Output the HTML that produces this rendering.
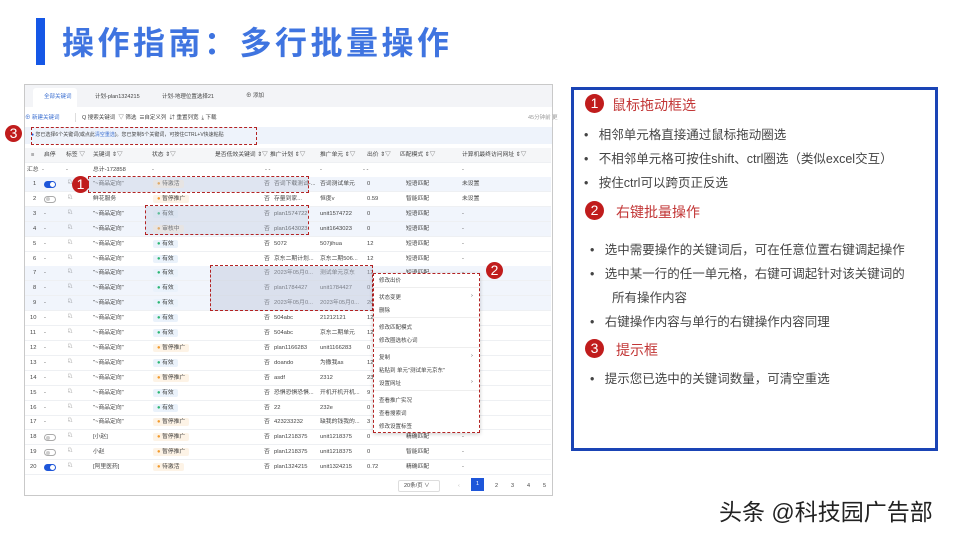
<!DOCTYPE html>
<html><head><meta charset="utf-8">
<style>
*{margin:0;padding:0;box-sizing:border-box}
body{width:960px;height:540px;background:#fff;position:relative;overflow:hidden;font-family:"Liberation Sans","Noto Sans CJK SC",sans-serif;color:#333}
.a{position:absolute;white-space:nowrap}
.t{font-size:5.5px;color:#444;line-height:8px}
.lk{color:#3b6fd1}
.row{position:absolute;left:25px;width:526px;height:15px;border-bottom:1px solid #eef0f3}
.row span{position:absolute;top:3px;font-size:5.8px;line-height:8px;white-space:nowrap;color:#444}
.tag{padding:0 4px;border-radius:2px}
.tg{background:#eaf2fb}
.to{background:#fdf3e6}
.tg:before{content:"● ";color:#2bb673}
.to:before{content:"● ";color:#f39a2b}
.tog{width:12px;height:7px;border-radius:4px;top:4px!important}
.on{background:#1e56d9}
.on:after{content:"";position:absolute;right:1px;top:1px;width:5px;height:5px;background:#fff;border-radius:50%}
.off{background:#fff;border:1px solid #aaa}
.off:after{content:"";position:absolute;left:1px;top:0.5px;width:4px;height:4px;background:#ccc;border-radius:50%}
.dash{position:absolute;border:1px dashed #b32323}
.circ{position:absolute;width:17px;height:17px;border-radius:50%;background:#c01c1c;color:#fff;font-size:14px;line-height:17px;text-align:center}
.menu span{position:absolute;left:6px;font-size:5.5px;color:#444;white-space:nowrap}
.rp p{position:absolute;font-size:12.5px;color:#444;white-space:nowrap;font-family:"Liberation Sans","Noto Sans CJK SC",sans-serif}
.rp .h{color:#c23535;font-size:14px}
.rp .circ{width:19px;height:19px;line-height:19px;font-size:14px}
</style></head><body>

<div class="a" style="left:36px;top:18px;width:9px;height:47px;background:#1557e6"></div>
<div class="a" style="left:62px;top:22px;font-size:32px;font-weight:bold;color:#3f74e0;letter-spacing:3.5px;line-height:38px;font-family:'Noto Sans CJK SC',sans-serif">操作指南：多行批量操作</div>

<div class="a" style="left:24px;top:84px;width:529px;height:412px;border:1px solid #c9c9c9;background:#fff"></div>
<div class="a" style="left:25px;top:85px;width:527px;height:22px;background:#f3f4f7"></div>
<div class="a" style="left:33px;top:88px;width:44px;height:19px;background:#fff;border-radius:3px 3px 0 0"></div>
<div class="a t lk" style="left:44px;top:93px">全部关键词</div>
<div class="a t" style="left:95px;top:93px">计划-plan1324215</div>
<div class="a t" style="left:162px;top:93px">计划-地理位置选择21</div>
<div class="a t" style="left:246px;top:92px">⊕ 添加</div>

<div class="a t lk" style="left:25px;top:114px">⊕ 新建关键词</div>
<div class="a" style="left:75px;top:113px;width:1px;height:9px;background:#ddd"></div>
<div class="a t" style="left:82px;top:114px">Q 搜索关键词 &nbsp;▽ 筛选 &nbsp;☰自定义列 &nbsp;⇵ 重置列宽 &nbsp;⤓ 下载</div>
<div class="a t" style="left:528px;top:114px;color:#999">45分钟前 更</div>

<div class="a" style="left:25px;top:127px;width:527px;height:17px;background:#eef3fb"></div>
<div class="a t" style="left:31px;top:131px;font-size:5px"><span style="color:#1e56d9">●</span> 您已选择6个关键词(或点此<span class="lk">清空重选</span>)。您已复制5个关键词，可按住CTRL+V快速粘贴</div>
<div class="dash" style="left:31px;top:127px;width:226px;height:18px"></div>

<div class="row" style="top:148px;background:#f5f6f8">
<span style="left:6px">≡</span><span style="left:19px">启停</span><span style="left:41px">标签 ▽</span><span style="left:68px">关键词 ⇕▽</span><span style="left:127px">状态 ⇕▽</span><span style="left:190px">是否低效关键词 ⇕▽</span><span style="left:245px">推广计划 ⇕▽</span><span style="left:295px">推广单元 ⇕▽</span><span style="left:342px">出价 ⇕▽</span><span style="left:375px">匹配模式 ⇕▽</span><span style="left:437px">计算机最终访问网址 ⇕▽</span></div>
<div class="row" style="top:163px">
<span style="left:2px">汇总</span><span style="left:17px">-</span><span style="left:41px">-</span><span style="left:68px">总计-172858</span><span style="left:127px">-</span><span style="left:240px">- -</span><span style="left:295px">-</span><span style="left:338px">- -</span><span style="left:437px">-</span></div>

<div id="rows"></div>

<div class="a" style="left:88px;top:177px;width:220px;height:15px;background:rgba(190,200,220,.35)"></div>
<div class="a" style="left:145px;top:206px;width:163px;height:29px;background:rgba(190,200,220,.35)"></div>
<div class="a" style="left:210px;top:266px;width:163px;height:45px;background:rgba(190,200,220,.45)"></div>
<div class="dash" style="left:88px;top:176px;width:221px;height:17px"></div>
<div class="dash" style="left:145px;top:205px;width:164px;height:30px"></div>
<div class="dash" style="left:210px;top:265px;width:163px;height:46px"></div>

<div class="a menu" style="left:373px;top:273px;width:107px;height:160px;background:#fff;box-shadow:0 1px 4px rgba(0,0,0,.2)">
<span style="top:3px">修改出价</span>
<div class="a" style="left:0;top:14px;width:107px;height:1px;background:#eee"></div>
<span style="top:20px">状态变更</span><span style="top:20px;left:98px">›</span>
<span style="top:33px">删除</span>
<div class="a" style="left:0;top:44px;width:107px;height:1px;background:#eee"></div>
<span style="top:50px">修改匹配模式</span>
<span style="top:63px">修改圈选核心词</span>
<div class="a" style="left:0;top:74px;width:107px;height:1px;background:#eee"></div>
<span style="top:80px">复制</span><span style="top:80px;left:98px">›</span>
<span style="top:93px">粘贴到 单元"测试单元京东"</span>
<span style="top:106px">设置网址</span><span style="top:106px;left:98px">›</span>
<div class="a" style="left:0;top:117px;width:107px;height:1px;background:#eee"></div>
<span style="top:123px">查看推广实况</span>
<span style="top:136px">查看搜索词</span>
<span style="top:149px">修改设置标签</span>
</div>
<div class="dash" style="left:373px;top:273px;width:107px;height:160px"></div>

<div class="a t" style="left:398px;top:480px;width:42px;height:12px;border:1px solid #ddd;border-radius:2px;padding:1px 5px">20条/页 ∨</div>
<div class="a t" style="left:458px;top:482px;color:#bbb">‹</div>
<div class="a" style="left:471px;top:478px;width:13px;height:13px;background:#1e56d9;color:#fff;font-size:5.5px;text-align:center;line-height:13px">1</div>
<div class="a t" style="left:495px;top:482px">2</div>
<div class="a t" style="left:511px;top:482px">3</div>
<div class="a t" style="left:527px;top:482px">4</div>
<div class="a t" style="left:543px;top:482px">5</div>

<div class="circ" style="left:72px;top:176px">1</div>
<div class="circ" style="left:486px;top:262px">2</div>
<div class="circ" style="left:5px;top:125px">3</div>

<div class="a rp" style="left:571px;top:87px;width:367px;height:364px;border:3px solid #1a44b5">
<div class="circ" style="left:11px;top:4px">1</div>
<p class="h" style="left:38px;top:5px">鼠标拖动框选</p>
<p style="left:10px;top:34px">•&nbsp;&nbsp; 相邻单元格直接通过鼠标拖动圈选</p>
<p style="left:10px;top:58px">•&nbsp;&nbsp; 不相邻单元格可按住shift、ctrl圈选（类似excel交互）</p>
<p style="left:10px;top:82px">•&nbsp;&nbsp; 按住ctrl可以跨页正反选</p>
<div class="circ" style="left:11px;top:111px">2</div>
<p class="h" style="left:42px;top:112px">右键批量操作</p>
<p style="left:16px;top:149px">•&nbsp;&nbsp; 选中需要操作的关键词后，可在任意位置右键调起操作</p>
<p style="left:16px;top:173px">•&nbsp;&nbsp; 选中某一行的任一单元格，右键可调起针对该关键词的</p>
<p style="left:38px;top:197px">所有操作内容</p>
<p style="left:16px;top:221px">•&nbsp;&nbsp; 右键操作内容与单行的右键操作内容同理</p>
<div class="circ" style="left:11px;top:249px">3</div>
<p class="h" style="left:42px;top:250px">提示框</p>
<p style="left:16px;top:278px">•&nbsp;&nbsp; 提示您已选中的关键词数量，可清空重选</p>
</div>

<div class="a" style="left:719px;top:498px;font-size:23px;color:#222;line-height:28px">头条 @科技园广告部</div>

<script>
var d=[
["on","\"~商品定向\"","o","待激活","否词下载测试-...","否词测试单元","0","短语匹配","未设置",1],
["off","鲜花服务","o","暂停推广","存量到家...","恒度v","0.59","智能匹配","未设置",0],
["-","\"~商品定向\"","g","有效","plan1574722","unit1574722","0","短语匹配","-",1],
["-","\"~商品定向\"","o","审核中","plan1643023","unit1643023","0","短语匹配","-",1],
["-","\"~商品定向\"","g","有效","5072","507jihua","12","短语匹配","-",0],
["-","\"~商品定向\"","g","有效","京东二期计划...","京东二期506...","12","短语匹配","-",0],
["-","\"~商品定向\"","g","有效","2023年05月0...","测试单元京东","12","短语匹配","-",1],
["-","\"~商品定向\"","g","有效","plan1784427","unit1784427","0","短语匹配","-",1],
["-","\"~商品定向\"","g","有效","2023年05月0...","2023年05月0...","20","短语匹配","-",1],
["-","\"~商品定向\"","g","有效","504abc","21212121","12","短语匹配","-",0],
["-","\"~商品定向\"","g","有效","504abc","京东二期单元","12","短语匹配","-",0],
["-","\"~商品定向\"","o","暂停推广","plan1166283","unit1166283","0","短语匹配","-",0],
["-","\"~商品定向\"","g","有效","doando","为撒我as","12","短语匹配","-",0],
["-","\"~商品定向\"","o","暂停推广","asdf","2312","23","短语匹配","-",0],
["-","\"~商品定向\"","g","有效","恐惧恐惧恐惧...","开机开机开机...","9","短语匹配","-",0],
["-","\"~商品定向\"","g","有效","22","232e","0","短语匹配","-",0],
["-","\"~商品定向\"","o","暂停推广","423233232","缺我的钱我的...","3","短语匹配","-",0],
["off","[小赵]","o","暂停推广","plan1218375","unit1218375","0","精确匹配","-",0],
["off","小赵","o","暂停推广","plan1218375","unit1218375","0","智能匹配","-",0],
["on","[阿里医药]","o","待激活","plan1324215","unit1324215","0.72","精确匹配","-",0]];
var h="";
d.forEach(function(r,i){
var top=177+i*14.9;
var tg=r[0]=="-"?'<span style="left:19px">-</span>':'<span class="tog '+r[0]+'" style="left:19px"></span>';
h+='<div class="row" style="top:'+top+'px;height:15px;'+(r[9]?'background:#f1f5fc':'')+'">'+
'<span style="left:'+(i<9?8:5)+'px">'+(i+1)+'</span>'+tg+
'<span style="left:42px;font-size:7px;top:2px">♘</span>'+
'<span style="left:68px">'+r[1]+'</span>'+
'<span class="tag t'+r[2]+'" style="left:128px">'+r[3]+'</span>'+
'<span style="left:239px">否</span>'+
'<span class="lk" style="left:249px">'+r[4]+'</span>'+
'<span class="lk" style="left:295px">'+r[5]+'</span>'+
'<span style="left:342px">'+r[6]+'</span>'+
'<span style="left:381px">'+r[7]+'</span>'+
'<span style="left:437px">'+r[8]+'</span></div>';});
document.getElementById("rows").outerHTML=h;
</script>
</body></html>
